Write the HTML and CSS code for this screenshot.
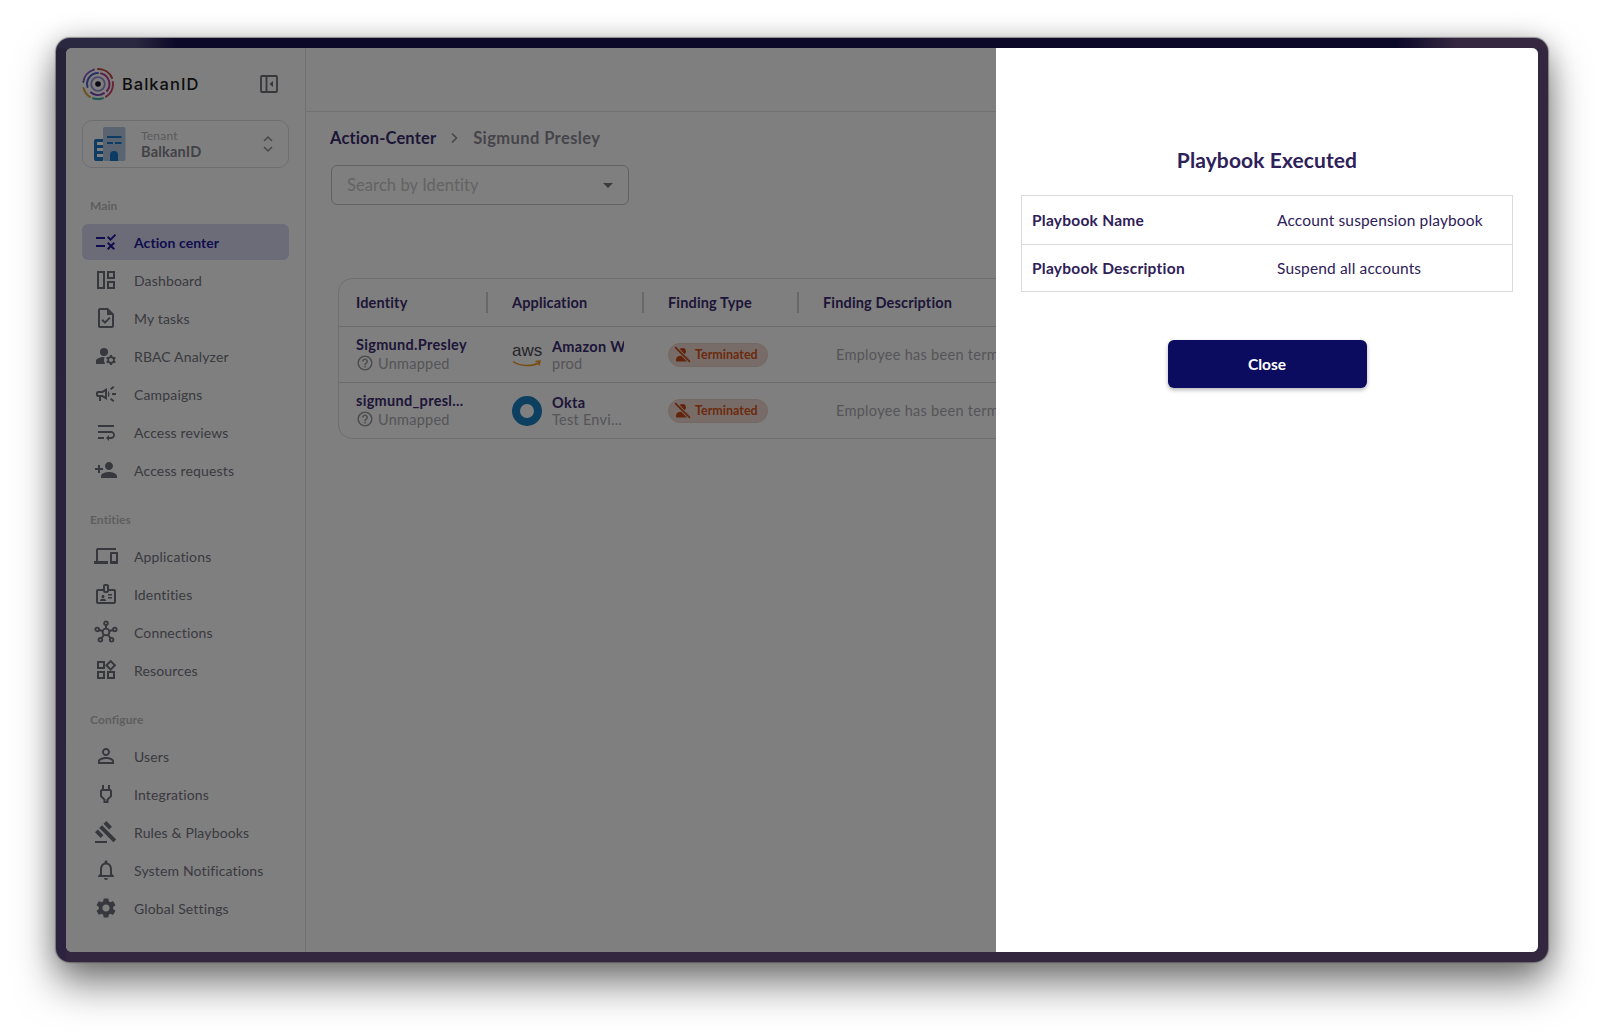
FILE: index.html
```html
<!DOCTYPE html>
<html lang="en">
<head>
    <meta charset="UTF-8">
    <title>BalkanID - Action Center</title>
    <link rel="stylesheet" href="styles.css">
</head>
<body>
    <!-- icon sprite -->
    <svg class="sprite" xmlns="http://www.w3.org/2000/svg">
        <symbol id="i-rule" viewBox="0 0 24 24"><path d="M16.54 11L13 7.46l1.41-1.41 2.12 2.12 4.24-4.24 1.41 1.41L16.54 11zM11 7H2v2h9V7zm10 6.41L19.59 12 17 14.59 14.41 12 13 13.41 15.59 16 13 18.59 14.41 20 17 17.41 19.59 20 21 18.59 18.41 16 21 13.41zM11 15H2v2h9v-2z"/></symbol>
        <symbol id="i-dashboard" viewBox="0 0 24 24"><path fill-rule="evenodd" d="M3 3h8v18H3V3zm2 2v14h4V5H5zM13 3h8v8h-8V3zm2 2v4h4V5h-4zM13 13h8v8h-8v-8zm2 2v4h4v-4h-4z"/></symbol>
        <symbol id="i-task" viewBox="0 0 24 24"><path d="M14 2H6c-1.1 0-1.99.9-1.99 2L4 20c0 1.1.89 2 1.99 2H18c1.1 0 2-.9 2-2V8l-6-6zm4 18H6V4h7v5h5v11zm-9.18-6.95L7.4 14.46 10.94 18l5.66-5.66-1.41-1.41-4.24 4.24-2.13-2.12z"/></symbol>
        <symbol id="i-rbac" viewBox="0 0 24 24"><circle cx="10" cy="8" r="4"/><path d="M10.67 13.02c-.22-.01-.44-.02-.67-.02-2.42 0-4.68.67-6.61 1.82-.88.52-1.39 1.5-1.39 2.53V20h9.26c-.79-1.13-1.26-2.51-1.26-4 0-1.07.25-2.07.67-2.98z"/><path d="M20.75 16c0-.22-.03-.42-.06-.63l1.14-1.01-1-1.73-1.45.49c-.32-.27-.68-.48-1.08-.63L18 11h-2l-.3 1.49c-.4.15-.76.36-1.08.63l-1.45-.49-1 1.73 1.14 1.01c-.03.21-.06.41-.06.63s.03.42.06.63l-1.14 1.01 1 1.73 1.45-.49c.32.27.68.48 1.08.63L16 21h2l.3-1.49c.4-.15.76-.36 1.08-.63l1.45.49 1-1.73-1.14-1.01c.03-.21.06-.41.06-.63zM17 18c-1.1 0-2-.9-2-2s.9-2 2-2 2 .9 2 2-.9 2-2 2z"/></symbol>
        <symbol id="i-campaign" viewBox="0 0 24 24"><path d="M18 11v2h4v-2h-4zm-2 6.61c.96.71 2.21 1.65 3.2 2.39.4-.53.8-1.07 1.2-1.6-.99-.74-2.24-1.68-3.2-2.4-.4.54-.8 1.08-1.2 1.61zM20.4 5.6c-.4-.53-.8-1.07-1.2-1.6-.99.74-2.24 1.68-3.2 2.4.4.53.8 1.07 1.2 1.6.96-.72 2.21-1.65 3.2-2.4zM4 9c-1.1 0-2 .9-2 2v2c0 1.1.9 2 2 2h1v4h2v-4h1l5 3V6L8 9H4zm5.03 1.71L11 9.53v4.94l-1.97-1.18-.48-.29H4v-2h4.55l.48-.29zM15.5 12c0-1.33-.58-2.53-1.5-3.35v6.69c.92-.81 1.5-2.01 1.5-3.34z"/></symbol>
        <symbol id="i-wrap" viewBox="0 0 24 24"><path d="M4 19h6v-2H4v2zM20 5H4v2h16V5zm-3 6H4v2h13.25c1.1 0 2 .9 2 2s-.9 2-2 2H15v-2l-3 3 3 3v-2h2c2.21 0 4-1.79 4-4s-1.79-4-4-4z"/></symbol>
        <symbol id="i-person-add" viewBox="0 0 24 24"><path d="M15 12c2.21 0 4-1.79 4-4s-1.79-4-4-4-4 1.79-4 4 1.79 4 4 4zm-9-2V7H4v3H1v2h3v3h2v-3h3v-2H6zm9 4c-2.67 0-8 1.34-8 4v2h16v-2c0-2.66-5.33-4-8-4z"/></symbol>
        <symbol id="i-devices" viewBox="0 0 24 24"><path d="M4 6h18V4H4c-1.1 0-2 .9-2 2v11H0v3h14v-3H4V6zm19 2h-6c-.55 0-1 .45-1 1v10c0 .55.45 1 1 1h6c.55 0 1-.45 1-1V9c0-.55-.45-1-1-1zm-1 9h-4v-7h4v7z"/></symbol>
        <symbol id="i-badge" viewBox="0 0 24 24"><path d="M20 7h-5V4c0-1.1-.9-2-2-2h-2c-1.1 0-2 .9-2 2v3H4c-1.1 0-2 .9-2 2v11c0 1.1.9 2 2 2h16c1.1 0 2-.9 2-2V9c0-1.1-.9-2-2-2zM11 4h2v5h-2V4zm9 16H4V9h5c0 1.1.9 2 2 2h2c1.1 0 2-.9 2-2h5v11zm-11-4c.83 0 1.5-.67 1.5-1.5S9.83 13 9 13s-1.5.67-1.5 1.5S8.17 16 9 16zm2.08 1.18c-.64-.28-1.34-.43-2.08-.43s-1.44.15-2.08.43C6.36 17.42 6 17.96 6 18.57V19h6v-.43c0-.61-.36-1.15-.92-1.39zM14 15h4v1.5h-4zm0-3h4v1.5h-4z"/></symbol>
        <symbol id="i-hub" viewBox="0 0 24 24"><g fill="none" stroke="currentColor" stroke-width="1.9"><circle cx="12" cy="12" r="3.4"/><circle cx="12" cy="3.2" r="1.8"/><circle cx="3.2" cy="9.4" r="1.8"/><circle cx="20.8" cy="9.4" r="1.8"/><circle cx="6.4" cy="19.8" r="1.8"/><circle cx="17.6" cy="19.8" r="1.8"/><path d="M12 5v3.6M5 10l3.8 1M19 10l-3.8 1M7.5 18.3l2.4-3.6M16.500 18.300l-2.400-3.600"/></g></symbol>
        <symbol id="i-widgets" viewBox="0 0 24 24"><path d="M16.66 4.52l2.83 2.83-2.83 2.83-2.83-2.83 2.83-2.83M9 5v4H5V5h4m10 10v4h-4v-4h4M9 15v4H5v-4h4m7.66-13.31L11 7.34 16.66 13l5.66-5.66-5.66-5.65zM11 3H3v8h8V3zm10 10h-8v8h8v-8zm-10 0H3v8h8v-8z"/></symbol>
        <symbol id="i-user" viewBox="0 0 24 24"><path d="M12 5.9c1.16 0 2.1.94 2.1 2.1s-.94 2.1-2.1 2.1S9.9 9.16 9.9 8s.94-2.1 2.1-2.1m0 9c2.97 0 6.1 1.46 6.1 2.1v1.1H5.9V17c0-.64 3.13-2.1 6.1-2.1M12 4C9.79 4 8 5.79 8 8s1.79 4 4 4 4-1.79 4-4-1.79-4-4-4zm0 9c-2.67 0-8 1.34-8 4v3h16v-3c0-2.66-5.33-4-8-4z"/></symbol>
        <symbol id="i-plug" viewBox="0 0 24 24"><path d="M16.01 7L16 3h-2v4h-4V3H8v4h-.01C7 7 6 8 6 9v5.49L9.5 18v3h5v-3l3.5-3.51V9c0-1-1-2-1.99-2zM16 13.66l-3.5 3.51V19h-1v-1.83L8 13.65V9.02L16 9v4.66z"/></symbol>
        <symbol id="i-gavel" viewBox="0 0 24 24"><path d="M1 21h12v2H1zM5.245 8.07l2.83-2.827 14.14 14.142-2.828 2.828zM12.317 1l5.657 5.656-2.83 2.83-5.654-5.66zM3.825 9.485l5.657 5.657-2.828 2.828-5.657-5.657z"/></symbol>
        <symbol id="i-bell" viewBox="0 0 24 24"><path d="M12 22c1.1 0 2-.9 2-2h-4c0 1.1.9 2 2 2zm6-6v-5c0-3.07-1.63-5.64-4.5-6.32V4c0-.83-.67-1.5-1.5-1.5s-1.5.67-1.5 1.5v.68C7.64 5.36 6 7.92 6 11v5l-2 2v1h16v-1l-2-2zm-2 1H8v-6c0-2.48 1.51-4.5 4-4.5s4 2.02 4 4.5v6z"/></symbol>
        <symbol id="i-gear" viewBox="0 0 24 24"><path d="M19.14 12.94c.04-.3.06-.61.06-.94 0-.32-.02-.64-.07-.94l2.03-1.58c.18-.14.23-.41.12-.61l-1.92-3.32c-.12-.22-.37-.29-.59-.22l-2.39.96c-.5-.38-1.03-.7-1.62-.94l-.36-2.54c-.04-.24-.24-.41-.48-.41h-3.84c-.24 0-.43.17-.47.41l-.36 2.54c-.59.24-1.13.57-1.62.94l-2.39-.96c-.22-.08-.47 0-.59.22L2.74 8.87c-.12.21-.08.47.12.61l2.03 1.58c-.05.3-.09.63-.09.94s.02.64.07.94l-2.03 1.58c-.18.14-.23.41-.12.61l1.92 3.32c.12.22.37.29.59.22l2.39-.96c.5.38 1.03.7 1.62.94l.36 2.54c.05.24.24.41.48.41h3.84c.24 0 .44-.17.47-.41l.36-2.54c.59-.24 1.13-.56 1.62-.94l2.39.96c.22.08.47 0 .59-.22l1.92-3.32c.12-.22.07-.47-.12-.61l-2.01-1.58zM12 15.6c-1.98 0-3.6-1.62-3.6-3.6s1.62-3.6 3.6-3.6 3.6 1.62 3.6 3.6-1.62 3.6-3.6 3.6z"/></symbol>
        <symbol id="i-help" viewBox="0 0 24 24"><path d="M11 18h2v-2h-2v2zm1-16C6.48 2 2 6.48 2 12s4.48 10 10 10 10-4.48 10-10S17.52 2 12 2zm0 18c-4.41 0-8-3.59-8-8s3.59-8 8-8 8 3.59 8 8-3.59 8-8 8zm0-14c-2.21 0-4 1.79-4 4h2c0-1.1.9-2 2-2s2 .9 2 2c0 2-3 1.75-3 5h2c0-2.25 3-2.5 3-5 0-2.21-1.79-4-4-4z"/></symbol>
        <symbol id="i-off" viewBox="0 0 16 16"><circle cx="8" cy="5" r="3.200"/><path d="M2 14.500v-2C2 10 5.600 9 8 9s6 1 6 3.500v2z"/><path d="M1 1l14 14" stroke="#eed9d0" stroke-width="3.400"/><path d="M1 1l14 14" stroke="currentColor" stroke-width="1.500"/></symbol>
        <symbol id="i-okta" viewBox="0 0 30 30"><path fill-rule="evenodd" d="M15 0a15 15 0 1 1 0 30 15 15 0 0 1 0-30zm0 8a7 7 0 1 0 0 14 7 7 0 0 0 0-14z"/></symbol>
    </svg>

    <div class="frame">
        <div class="app">
            <aside class="sidebar">
                <div class="brand">
                    <svg class="logo" viewBox="0 0 32 32" fill="none" stroke-linecap="round">
                        <path d="M1.500 20A15 15 0 0 0 8 29" stroke="#d8a23a" stroke-width="2"/>
                        <path d="M11 30.200a15 15 0 0 0 10 0" stroke="#3fb0a0" stroke-width="2"/>
                        <path d="M24 28.700A15 15 0 0 0 30.800 14" stroke="#d24b6a" stroke-width="2"/>
                        <path d="M30 10A15 15 0 0 0 16 1" stroke="#c8483f" stroke-width="2"/>
                        <path d="M12 1.600A15 15 0 0 0 1.300 14" stroke="#8a5ac8" stroke-width="2"/>
                        <path d="M5.500 19A11 11 0 0 1 16 5" stroke="#4b63c8" stroke-width="2"/>
                        <path d="M19 5.400A11 11 0 0 1 25 23" stroke="#b23a8f" stroke-width="2"/>
                        <path d="M22 25.200A11 11 0 0 1 9 24.500" stroke="#7b3fb0" stroke-width="2"/>
                        <circle cx="16" cy="16" r="6.800" stroke="#9a8ad8" stroke-width="1.800"/>
                        <circle cx="16" cy="16" r="2.800" fill="#15132b"/>
                    </svg>
                    <span class="brand-name">BalkanID</span>
                    <svg class="collapse" viewBox="0 0 18 18" fill="none" stroke="#6f6f78" stroke-width="1.800">
                        <rect x="1" y="1" width="16" height="16" rx="1"/>
                        <path d="M6.500 1v16"/>
                        <path d="M13 6v6l-3.500-3z" fill="#6f6f78" stroke="none"/>
                    </svg>
                </div>

                <div class="tenant">
                    <svg class="tenant-icon" viewBox="0 0 32 34">
                        <rect x="9" y="0" width="22.500" height="34" rx="2" fill="#b4c8e2"/>
                        <path d="M0 14a2 2 0 0 1 2-2h7v3H3v3h6v3H3v3h6v3H3v3h6v4H2a2 2 0 0 1-2-2z" fill="#1976c8"/>
                        <path d="M13 9h14.500v2H13zM13 15h6v2h-6zM21 15h6.500v2H21z" fill="#1976c8"/>
                        <path d="M16 34v-6a4 4 0 0 1 8 0v6z" fill="#1976c8"/>
                    </svg>
                    <div class="tenant-text">
                        <span class="tenant-label">Tenant</span>
                        <span class="tenant-name">BalkanID</span>
                    </div>
                    <svg class="tenant-arrows" viewBox="0 0 12 20" fill="none" stroke="#8c8c96" stroke-width="1.500">
                        <path d="M2 7l4-4 4 4M2 13l4 4 4-4"/>
                    </svg>
                </div>

                <nav class="nav">
                    <div class="nav-title">Main</div>
                    <a class="nav-item active"><svg class="nav-icon"><use href="#i-rule"/></svg>Action center</a>
                    <a class="nav-item"><svg class="nav-icon"><use href="#i-dashboard"/></svg>Dashboard</a>
                    <a class="nav-item"><svg class="nav-icon"><use href="#i-task"/></svg>My tasks</a>
                    <a class="nav-item"><svg class="nav-icon"><use href="#i-rbac"/></svg>RBAC Analyzer</a>
                    <a class="nav-item"><svg class="nav-icon"><use href="#i-campaign"/></svg>Campaigns</a>
                    <a class="nav-item"><svg class="nav-icon"><use href="#i-wrap"/></svg>Access reviews</a>
                    <a class="nav-item"><svg class="nav-icon"><use href="#i-person-add"/></svg>Access requests</a>

                    <div class="nav-title">Entities</div>
                    <a class="nav-item"><svg class="nav-icon"><use href="#i-devices"/></svg>Applications</a>
                    <a class="nav-item"><svg class="nav-icon"><use href="#i-badge"/></svg>Identities</a>
                    <a class="nav-item"><svg class="nav-icon"><use href="#i-hub"/></svg>Connections</a>
                    <a class="nav-item"><svg class="nav-icon"><use href="#i-widgets"/></svg>Resources</a>

                    <div class="nav-title">Configure</div>
                    <a class="nav-item"><svg class="nav-icon"><use href="#i-user"/></svg>Users</a>
                    <a class="nav-item"><svg class="nav-icon"><use href="#i-plug"/></svg>Integrations</a>
                    <a class="nav-item"><svg class="nav-icon"><use href="#i-gavel"/></svg>Rules &amp; Playbooks</a>
                    <a class="nav-item"><svg class="nav-icon"><use href="#i-bell"/></svg>System Notifications</a>
                    <a class="nav-item"><svg class="nav-icon"><use href="#i-gear"/></svg>Global Settings</a>
                </nav>
            </aside>

            <main class="main">
                <div class="topbar"></div>
                <div class="content">
                    <div class="breadcrumb">
                        <span class="crumb-root">Action-Center</span>
                        <svg class="crumb-sep" viewBox="0 0 8 12" fill="none" stroke="#8a8a96" stroke-width="1.600"><path d="M2 1.500L6.500 6 2 10.500"/></svg>
                        <span class="crumb-current">Sigmund Presley</span>
                    </div>

                    <div class="search">
                        <span>Search by Identity</span>
                        <span class="search-caret"></span>
                    </div>

                    <div class="table">
                        <div class="table-row table-head">
                            <div class="cell"><span>Identity</span></div>
                            <div class="cell"><span>Application</span></div>
                            <div class="cell"><span>Finding Type</span></div>
                            <div class="cell"><span>Finding Description</span></div>
                        </div>
                        <div class="table-row">
                            <div class="cell cell-stack">
                                <span class="primary">Sigmund.Presley</span>
                                <span class="secondary"><svg class="help-icon"><use href="#i-help"/></svg>Unmapped</span>
                            </div>
                            <div class="cell cell-app">
                                <div class="aws-logo">
                                    <span class="aws-text">aws</span>
                                    <svg class="aws-arrow" viewBox="0 0 30 8" fill="none"><path d="M1 1.500C8 6.500 20 7 27 2.500M23.500 1.500l4.500-.5-1 4.500" stroke="#f09a1f" stroke-width="1.500"/></svg>
                                </div>
                                <div class="app-text">
                                    <span class="primary">Amazon Web Services</span>
                                    <span class="secondary">prod</span>
                                </div>
                            </div>
                            <div class="cell cell-type"><span class="chip"><svg class="chip-icon"><use href="#i-off"/></svg>Terminated</span></div>
                            <div class="cell cell-desc">Employee has been terminated in HR system</div>
                        </div>
                        <div class="table-row">
                            <div class="cell cell-stack">
                                <span class="primary">sigmund_presl...</span>
                                <span class="secondary"><svg class="help-icon"><use href="#i-help"/></svg>Unmapped</span>
                            </div>
                            <div class="cell cell-app">
                                <svg class="okta-logo"><use href="#i-okta"/></svg>
                                <div class="app-text">
                                    <span class="primary">Okta</span>
                                    <span class="secondary">Test Envi...</span>
                                </div>
                            </div>
                            <div class="cell cell-type"><span class="chip"><svg class="chip-icon"><use href="#i-off"/></svg>Terminated</span></div>
                            <div class="cell cell-desc">Employee has been terminated in HR system</div>
                        </div>
                    </div>
                </div>
            </main>

            <div class="overlay"></div>

            <section class="drawer">
                <h2 class="drawer-title">Playbook Executed</h2>
                <div class="detail-table">
                    <div class="detail-row">
                        <span class="detail-label">Playbook Name</span>
                        <span class="detail-value">Account suspension playbook</span>
                    </div>
                    <div class="detail-row">
                        <span class="detail-label">Playbook Description</span>
                        <span class="detail-value">Suspend all accounts</span>
                    </div>
                </div>
                <button class="close-btn">Close</button>
            </section>
        </div>
    </div>
</body>
</html>
```

FILE: styles.css
```css
* {
    box-sizing: border-box;
}

body {
    margin: 0;
    width: 1604px;
    height: 1036px;
    padding: 38px 56px 74px 56px;
    background-color: #fff;
    font-family: Lato, "Noto Sans", sans-serif;
    overflow: hidden;
}

.sprite {
    display: none;
}

/* dark window frame around the app */
.frame {
    height: 100%;
    padding: 10px;
    border-radius: 14px;
    background:
        linear-gradient(90deg, #2a2840 0, #2a2840 80px, #0c0828 120px, #0c0828 1340px, #352840 1400px) top / 100% 10px no-repeat,
        linear-gradient(180deg, #262339, #2d2340) left / 10px 100% no-repeat,
        #33263f;
    box-shadow: 0 0 1px 1px rgba(60, 60, 70, 0.5), 0 22px 40px rgba(0, 0, 0, 0.5), 0 2px 26px rgba(0, 0, 0, 0.22);
}

.app {
    position: relative;
    display: flex;
    height: 100%;
    border-radius: 6px;
    background-color: #fff;
    overflow: hidden;
}

/* sidebar */
.sidebar {
    flex: none;
    width: 240px;
    padding: 20px 16px 0 16px;
    border-right: 1px solid #e2e2e6;
}

.brand {
    display: flex;
    align-items: center;
    height: 32px;
}

.logo {
    width: 32px;
    height: 32px;
}

.brand-name {
    margin-left: 8px;
    font-family: Inter, sans-serif;
    font-size: 16.500px;
    font-weight: 500;
    letter-spacing: 1px;
    color: #1c1c1c;
}

.collapse {
    width: 18px;
    height: 18px;
    margin-left: auto;
    margin-right: 11px;
}

.tenant {
    display: flex;
    align-items: center;
    height: 48px;
    margin-top: 20px;
    padding: 0 14px 0 11px;
    border: 1px solid #dcdce0;
    border-radius: 10px;
}

.tenant-icon {
    width: 32px;
    height: 34px;
}

.tenant-text {
    display: flex;
    flex-direction: column;
    margin-left: 15px;
}

.tenant-label {
    font-size: 12px;
    line-height: 15px;
    letter-spacing: 0.2px;
    color: #b4b4b8;
}

.tenant-name {
    font-size: 14.500px;
    line-height: 17px;
    font-weight: 700;
    letter-spacing: 0.2px;
    color: #84848f;
}

.tenant-arrows {
    width: 12px;
    height: 20px;
    margin-left: auto;
}

.nav {
    display: flex;
    flex-direction: column;
    gap: 2px;
    margin-top: 29px;
}

.nav-title {
    height: 18px;
    margin: 21px 0 7px 8px;
    font-size: 12px;
    line-height: 18px;
    font-weight: 700;
    letter-spacing: 0.1px;
    color: #bdbdc0;
}

.nav-title:first-child {
    margin-top: 0;
}

.nav-item {
    display: flex;
    align-items: center;
    height: 36px;
    padding-left: 12px;
    border-radius: 6px;
    font-size: 14px;
    letter-spacing: 0.15px;
    color: #74747f;
    fill: #6e6e7c;
}

.nav-item.active {
    background-color: #d8d8f0;
    font-weight: 700;
    letter-spacing: 0.08px;
    color: #1e1a9e;
    fill: #1e1a9e;
}

.nav-icon {
    flex: none;
    width: 24px;
    height: 24px;
    margin-right: 16px;
    color: #6e6e7c;
}

/* main area */
.main {
    flex: 1;
    min-width: 0;
}

.topbar {
    height: 64px;
    border-bottom: 1px solid #e2e2e6;
}

.content {
    padding: 14px 0 0 24px;
}

.breadcrumb {
    display: flex;
    align-items: center;
    height: 24px;
    font-size: 16.500px;
    font-weight: 700;
}

.crumb-root {
    letter-spacing: 0.15px;
    color: #3a2c70;
}

.crumb-sep {
    width: 8px;
    height: 12px;
    margin: 0 15px 0 14px;
}

.crumb-current {
    letter-spacing: 0.4px;
    color: #8a8a96;
}

.search {
    display: flex;
    align-items: center;
    justify-content: space-between;
    width: 298px;
    height: 40px;
    margin: 15px 0 0 1px;
    padding: 0 15px;
    border: 1px solid #c4c4c8;
    border-radius: 6px;
    font-size: 16.500px;
    letter-spacing: 0.1px;
    color: #c6c6c8;
}

.search-caret {
    width: 0;
    height: 0;
    border-left: 5px solid transparent;
    border-right: 5px solid transparent;
    border-top: 5px solid #77777f;
}

.table {
    width: 1180px;
    margin: 73px 0 0 8px;
    border: 1px solid #dcdce0;
    border-radius: 14px;
}

.table-row {
    display: grid;
    grid-template-columns: 149px 156px 155px 1fr;
    height: 56px;
    border-top: 1px solid #d8d8dc;
}

.table-head {
    height: 47px;
    border-top: 0;
}

.cell {
    display: flex;
    align-items: center;
    padding-left: 17px;
    min-width: 0;
}

.table-head .cell {
    padding-left: 24px;
    font-size: 14.500px;
    font-weight: 700;
    letter-spacing: 0.15px;
    color: #3a2c70;
}

.table-head .cell:first-child {
    padding-left: 17px;
}

.table-head .cell:not(:last-child) {
    border-right: 2px solid #d0d0d4;
    margin: 13px 0;
}

.cell-stack,
.app-text {
    flex-direction: column;
    align-items: flex-start;
    justify-content: center;
}

.cell-stack {
    padding-bottom: 2px;
}

.primary {
    font-size: 14.500px;
    line-height: 19px;
    font-weight: 700;
    letter-spacing: 0.3px;
    color: #3a2c70;
    white-space: nowrap;
}

.secondary {
    display: flex;
    align-items: center;
    font-size: 14.500px;
    line-height: 17px;
    letter-spacing: 0.25px;
    color: #aaaab0;
    white-space: nowrap;
}

.app-text .secondary {
    line-height: 15px;
}

.help-icon {
    width: 18px;
    height: 18px;
    margin-right: 4px;
    fill: #9a9aa0;
}

.cell-app {
    padding-left: 24px;
    overflow: hidden;
}

.aws-logo {
    position: relative;
    flex: none;
    width: 30px;
    height: 30px;
    margin-right: 10px;
}

.aws-text {
    display: block;
    font-family: "Liberation Sans", sans-serif;
    font-size: 17px;
    line-height: 22px;
    text-align: center;
    color: #4a4a54;
}

.aws-arrow {
    position: absolute;
    left: 0;
    top: 20px;
    width: 30px;
    height: 8px;
}

.okta-logo {
    flex: none;
    width: 30px;
    height: 30px;
    margin-right: 10px;
    fill: #1a7fc0;
}

.app-text {
    display: flex;
    width: 72px;
    padding-bottom: 2px;
    overflow: hidden;
}

.cell-type {
    padding-left: 24px;
}

.chip {
    display: flex;
    align-items: center;
    height: 24px;
    padding: 0 9px 0 5px;
    border: 1px solid #e8d0c4;
    border-radius: 12px;
    background-color: #eed9d0;
    font-size: 12.500px;
    font-weight: 700;
    color: #d9541a;
}

.chip-icon {
    width: 17px;
    height: 17px;
    margin-right: 4px;
    fill: currentColor;
    color: #c24a16;
}

.cell-desc {
    padding-left: 37px;
    font-size: 14.500px;
    letter-spacing: 0.3px;
    color: #aaaab0;
    white-space: nowrap;
}

/* modal */
.overlay {
    position: absolute;
    inset: 0;
    background-color: rgba(0, 0, 0, 0.5);
}

.drawer {
    position: absolute;
    top: 0;
    right: 0;
    bottom: 0;
    display: flex;
    flex-direction: column;
    align-items: center;
    width: 542px;
    padding: 98px 25px 0 25px;
    background-color: #fff;
}

.drawer-title {
    margin: 0;
    font-size: 21px;
    line-height: 28px;
    font-weight: 700;
    letter-spacing: 0.1px;
    color: #2e2058;
}

.detail-table {
    width: 100%;
    margin-top: 21px;
    border: 1px solid #dadade;
}

.detail-row {
    display: grid;
    grid-template-columns: 245px 1fr;
    align-items: center;
    height: 47px;
    padding-left: 10px;
    border-top: 1px solid #dadade;
    font-size: 15.500px;
    letter-spacing: 0.15px;
    color: #2e2058;
}

.detail-row:first-child {
    height: 48px;
    border-top: 0;
}

.detail-label {
    font-weight: 700;
    letter-spacing: 0.25px;
}

.close-btn {
    width: 199px;
    height: 48px;
    margin-top: 48px;
    border: 0;
    border-radius: 6px;
    background-color: #0b0b60;
    box-shadow: 0 2px 4px rgba(0, 0, 0, 0.3);
    font-family: inherit;
    font-size: 15.500px;
    font-weight: 700;
    color: #fff;
}
```
